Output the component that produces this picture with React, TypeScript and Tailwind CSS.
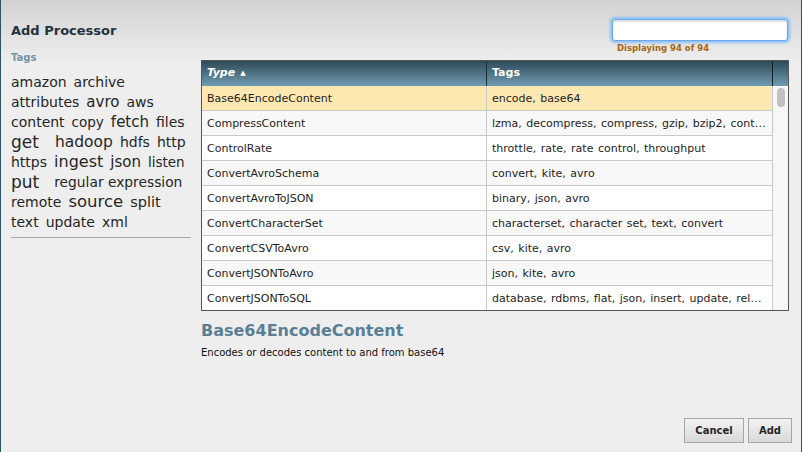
import React from 'react';

interface Tag {
  name: string;
  size: string;
  extra?: string;
}

const tags: Tag[] = [
  { name: 'amazon', size: 'text-[14px]' },
  { name: 'archive', size: 'text-[14px]' },
  { name: 'attributes', size: 'text-[14px]' },
  { name: 'avro', size: 'text-[15px]' },
  { name: 'aws', size: 'text-[14px]' },
  { name: 'content', size: 'text-[14px]' },
  { name: 'copy', size: 'text-[13.5px]' },
  { name: 'fetch', size: 'text-[15px]' },
  { name: 'files', size: 'text-[14px]' },
  { name: 'get', size: 'text-[17px]', extra: 'mr-[9px]' },
  { name: 'hadoop', size: 'text-[15.5px]' },
  { name: 'hdfs', size: 'text-[14px]' },
  { name: 'http', size: 'text-[14px]' },
  { name: 'https', size: 'text-[14px]' },
  { name: 'ingest', size: 'text-[16px]' },
  { name: 'json', size: 'text-[15px]' },
  { name: 'listen', size: 'text-[13.5px]' },
  { name: 'put', size: 'text-[17px]', extra: 'mr-[8px]' },
  { name: 'regular expression', size: 'text-[13.8px]' },
  { name: 'remote', size: 'text-[14px]' },
  { name: 'source', size: 'text-[16.5px]' },
  { name: 'split', size: 'text-[14.5px]' },
  { name: 'text', size: 'text-[14px]' },
  { name: 'update', size: 'text-[14px]' },
  { name: 'xml', size: 'text-[14px]' },
];

const processors = [
  ['Base64EncodeContent', 'encode, base64'],
  ['CompressContent', 'lzma, decompress, compress, gzip, bzip2, content'],
  ['ControlRate', 'throttle, rate, rate control, throughput'],
  ['ConvertAvroSchema', 'convert, kite, avro'],
  ['ConvertAvroToJSON', 'binary, json, avro'],
  ['ConvertCharacterSet', 'characterset, character set, text, convert'],
  ['ConvertCSVToAvro', 'csv, kite, avro'],
  ['ConvertJSONToAvro', 'json, kite, avro'],
  ['ConvertJSONToSQL', 'database, rdbms, flat, json, insert, update, relational, sql'],
];

export default function App() {
  return (
    <div className="w-[802px] h-[452px] flex border-x border-[#2b5565] bg-[linear-gradient(to_bottom,#d2d2d2_0px,#eeeeee_62px)] font-['DejaVu_Sans',sans-serif] text-[#222]">
      {/* left: title + tag cloud */}
      <div className="w-[180px] ml-[10px] pt-[23px] flex flex-col">
        <h1 className="text-[13px] leading-[16px] font-bold text-[#22333d]">Add Processor</h1>
        <div className="mt-[13px] text-[10px] leading-[12px] font-bold text-[#7592a4]">Tags</div>
        <div className="mt-2 flex flex-wrap items-end gap-x-[7px] text-[#262626]">
          {tags.map(t => (
            <span key={t.name} className={`h-5 leading-5 whitespace-nowrap ${t.size} ${t.extra ?? ''}`}>
              {t.name}
            </span>
          ))}
        </div>
        <div className="mt-[5px] border-t border-[#a9a9a9]" />
      </div>

      {/* right: search, table, details, buttons */}
      <div className="w-[588px] ml-[10px] pt-[19px] pb-[9px] flex flex-col">
        <div className="self-end w-[176px] mr-[1px] flex flex-col">
          <input
            className="h-[22px] w-full bg-white rounded-[3px] border border-[#6aa7ec] shadow-[0_0_3px_2px_#8cc0f5,inset_0_2px_2px_#dddddd] outline-none"
          />
          <div className="pl-[5px] mt-[1px] text-[8.5px] leading-[12px] font-bold text-[#a8650f]">Displaying 94 of 94</div>
        </div>

        <div className="mt-[6px] border border-[#555] bg-white">
          <div className="flex h-[25px] bg-[linear-gradient(to_bottom,#2e4a58,#6f9cb1)] text-white text-[11px] font-bold">
            <div className="w-[285px] border-r border-[#1c2e37] px-[5px] flex items-center gap-[5px]">
              <span className="italic">Type</span>
              <span className="text-[7px] leading-none">▲</span>
            </div>
            <div className="flex-1 border-r border-[#141f25] px-[5px] flex items-center">Tags</div>
            <div className="w-[15px]" />
          </div>
          <div className="flex h-[224px] overflow-hidden">
            <div className="flex-1 min-w-0 border-r border-[#c9c9c9]">
              {processors.map(([type, tagList], i) => (
                <div
                  key={type}
                  className={`flex h-[25px] border-b border-[#c9c9c9] text-[11px] leading-[25px] text-[#1e1e1e] ${
                    i === 0 ? 'bg-[#fee8b2]' : i % 2 === 1 ? 'bg-[#f8f8f8]' : 'bg-white'
                  }`}
                >
                  <div className="w-[285px] shrink-0 border-r border-[#c9c9c9] px-[5px]">{type}</div>
                  <div className="flex-1 min-w-0 pl-[5px] pr-[4px] truncate [word-spacing:1px]">{tagList}</div>
                </div>
              ))}
            </div>
            <div className="w-[15px] shrink-0 bg-[#f7f7f7] flex justify-center pt-[2px]">
              <div className="w-[8px] h-[19px] rounded-full bg-[#c1c1c1]" />
            </div>
          </div>
        </div>

        <h2 className="mt-[10px] text-[16px] leading-[20px] font-bold text-[#5a7f95]">Base64EncodeContent</h2>
        <p className="mt-[5px] text-[10px] leading-[14px] text-[#111]">Encodes or decodes content to and from base64</p>

        <div className="mt-auto -mr-[3px] flex justify-end gap-[4px]">
          <button className="w-[60px] h-[25px] border border-[#a6a6a6] bg-[linear-gradient(to_bottom,#f2f2f2,#d9d9d9)] text-[10px] font-bold text-[#262626]">
            Cancel
          </button>
          <button className="w-[44px] h-[25px] border border-[#a6a6a6] bg-[linear-gradient(to_bottom,#f2f2f2,#d9d9d9)] text-[10px] font-bold text-[#262626]">
            Add
          </button>
        </div>
      </div>
    </div>
  );
}
